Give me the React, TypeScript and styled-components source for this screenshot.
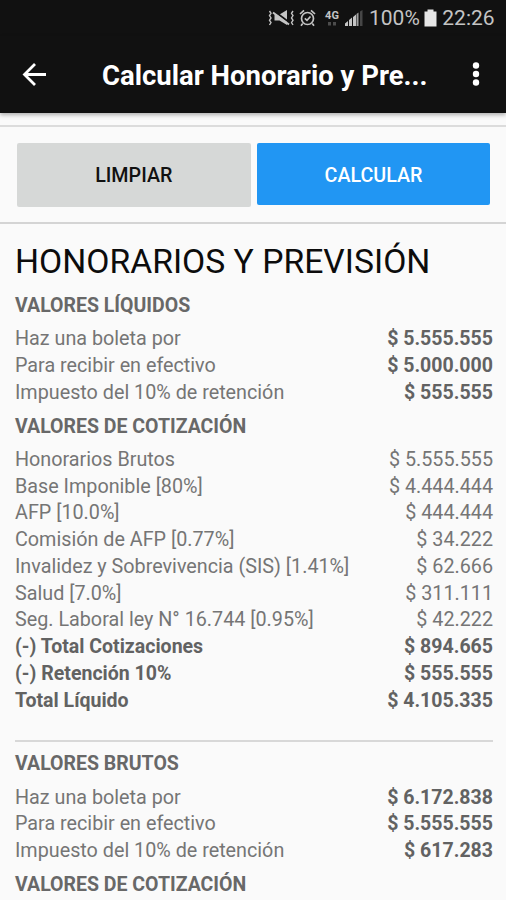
import React from 'react';
import styled, { createGlobalStyle } from 'styled-components';

const GlobalStyle = createGlobalStyle`
  * { box-sizing: border-box; }
  body { margin: 0; background: #fafafa; font-family: Roboto, sans-serif; }
`;

const Screen = styled.div`
  width: 506px;
  height: 900px;
  overflow: hidden;
  background: #fafafa;
  display: flex;
  flex-direction: column;
`;

const StatusBar = styled.div`
  flex: none;
  height: 36px;
  padding: 0 10px 0 268px;
  background: #111;
  color: #c4c4c4;
  display: flex;
  align-items: center;
  font-size: 21px;
  white-space: nowrap;
  svg { display: block; flex: none; }
`;

const StatusText = styled.span<{ $left: number }>`
  margin-left: ${(p) => p.$left}px;
  line-height: 36px;
`;

const Network = styled.span`
  width: 16px;
  margin-left: 8px;
  margin-top: -1px;
  display: flex;
  flex-direction: column;
  align-items: center;
  font-size: 11px;
  font-weight: 700;
  line-height: 11px;
`;

const AppBar = styled.header`
  flex: none;
  height: 77px;
  padding: 0 19px 0 21px;
  background: #111;
  color: #fff;
  display: flex;
  align-items: center;
  box-shadow: 0 2px 4px rgba(0, 0, 0, 0.3);
`;

const IconButton = styled.button`
  width: 28px;
  height: 28px;
  padding: 0;
  border: 0;
  background: none;
  color: inherit;
  svg { display: block; }
`;

const Title = styled.h1`
  margin: 2px auto 0 53px;
  width: 326px;
  font-size: 27.5px;
  font-weight: 700;
  line-height: 36px;
  white-space: nowrap;
`;

const Actions = styled.div`
  flex: none;
  height: 99px;
  margin-top: 12px;
  padding: 15.5px 16px 16px 16.5px;
  border-top: 2px solid #dcdcdc;
  border-bottom: 2px solid #d4d4d4;
  display: grid;
  grid-template-columns: 234.5px 233px;
  column-gap: 6px;
`;

const Button = styled.button<{ $primary?: boolean }>`
  height: ${(p) => (p.$primary ? 62 : 64)}px;
  padding: ${(p) => (p.$primary ? 4 : 2)}px 0 0;
  border: 0;
  border-radius: 2px;
  background: ${(p) => (p.$primary ? '#2196f3' : '#d6d8d7')};
  color: ${(p) => (p.$primary ? '#fff' : '#111')};
  font: 500 19.7px/24px Roboto, sans-serif;
`;

const Content = styled.main`
  padding: 18px 13px 0 15px;
  color: #6b6b6b;
`;

const Heading = styled.h2`
  margin: 0 0 3.5px;
  color: #0c0c0c;
  font-size: 33.7px;
  font-weight: 400;
  line-height: 40px;
  white-space: nowrap;
`;

const Section = styled.section<{ $divided?: boolean }>`
  border-top: ${(p) => (p.$divided ? '2px solid #d8d8d8' : '0')};
  margin-top: ${(p) => (p.$divided ? 25.5 : 0)}px;
  padding-top: ${(p) => (p.$divided ? 2.25 : 0)}px;
`;

const Subheading = styled.h3`
  margin: 0;
  padding: 8.25px 0;
  color: #686868;
  font-size: 19.5px;
  font-weight: 700;
  line-height: 24px;
`;

const Row = styled.div`
  height: 26.75px;
  display: flex;
  justify-content: space-between;
  font-size: 19.7px;
  line-height: 26.75px;
  white-space: nowrap;
`;

const Cell = styled.span<{ $bold?: boolean }>`
  font-size: ${(p) => (p.$bold ? 19.55 : 19.75)}px;
  font-weight: ${(p) => (p.$bold ? 700 : 400)};
  color: ${(p) => (p.$bold ? '#626262' : '#757575')};
`;

type Item = { label: string; value: string; bold?: 'value' | 'all' };

const liquid: Item[] = [
  { label: 'Haz una boleta por', value: '5.555.555', bold: 'value' },
  { label: 'Para recibir en efectivo', value: '5.000.000', bold: 'value' },
  { label: 'Impuesto del 10% de retención', value: '555.555', bold: 'value' },
];

const contributions: Item[] = [
  { label: 'Honorarios Brutos', value: '5.555.555' },
  { label: 'Base Imponible [80%]', value: '4.444.444' },
  { label: 'AFP [10.0%]', value: '444.444' },
  { label: 'Comisión de AFP [0.77%]', value: '34.222' },
  { label: 'Invalidez y Sobrevivencia (SIS) [1.41%]', value: '62.666' },
  { label: 'Salud [7.0%]', value: '311.111' },
  { label: 'Seg. Laboral ley N° 16.744 [0.95%]', value: '42.222' },
  { label: '(-) Total Cotizaciones', value: '894.665', bold: 'all' },
  { label: '(-) Retención 10%', value: '555.555', bold: 'all' },
  { label: 'Total Líquido', value: '4.105.335', bold: 'all' },
];

const gross: Item[] = [
  { label: 'Haz una boleta por', value: '6.172.838', bold: 'value' },
  { label: 'Para recibir en efectivo', value: '5.555.555', bold: 'value' },
  { label: 'Impuesto del 10% de retención', value: '617.283', bold: 'value' },
];

function Rows({ items }: { items: Item[] }) {
  return (
    <>
      {items.map((item) => (
        <Row key={item.label}>
          <Cell $bold={item.bold === 'all'}>{item.label}</Cell>
          <Cell $bold={!!item.bold}>$ {item.value}</Cell>
        </Row>
      ))}
    </>
  );
}

const MuteIcon = () => (
  <svg width="27" height="20" viewBox="0 0 27 20" fill="none" stroke="currentColor" strokeWidth="1.4">
    <path d="M1.500 3l1.500 2.300-1.500 2.300 1.500 2.400-1.500 2.300 1.500 2.300-1.500 2.400M25 3l-1.500 2.300 1.500 2.300-1.500 2.400 1.500 2.300-1.500 2.300 1.500 2.400" />
    <path d="M6.500 6.500h5L19 2v15l-7.500-4.500h-5z" fill="currentColor" stroke="none" />
    <path d="M6 3l16 12" stroke="#111" strokeWidth="2" />
    <path d="M5 4.500l16 12" strokeWidth="2" />
  </svg>
);

const AlarmIcon = () => (
  <svg width="17" height="18" viewBox="0 0 17 18" fill="none" stroke="currentColor" strokeWidth="1.7">
    <circle cx="8.500" cy="9.500" r="6" />
    <path d="M1 5l4-3.700M16 5l-4-3.700M3.700 14.500L2 16.700M13.300 14.500l1.700 2.200M5.800 9.300l2.200 2 3.500-3.800" />
  </svg>
);

const SignalIcon = () => (
  <svg width="20" height="18" viewBox="0 0 20 18" fill="currentColor">
    <path d="M1 17v-2.500l3-2.500v5zM5 17v-6l3-2.500V17zM9 17V8l3-2.500V17z" />
    <path d="M12.500 17V5L14.500 3.500V17z" opacity=".8" />
    <path d="M16 17V2.500L18.500 1v16z" opacity=".3" />
  </svg>
);

export default function App() {
  return (
    <>
      <GlobalStyle />
      <Screen>
        <StatusBar>
          <MuteIcon />
          <StatusText $left={4}><AlarmIcon /></StatusText>
          <Network>
            4G
            <svg width="8" height="5" viewBox="0 0 8 5" fill="#4c4c4c">
              <path d="M0 1h3v3.500H0zM5 1h3v3.500H5z" />
            </svg>
          </Network>
          <StatusText $left={4}><SignalIcon /></StatusText>
          <StatusText $left={5}>100%</StatusText>
          <StatusText $left={4}>
            <svg width="13" height="18" viewBox="0 0 13 18" fill="#e6e6e6">
              <path d="M3.500 0.500h6v2H12.500v15H0.500V2.500h3z" />
            </svg>
          </StatusText>
          <StatusText $left={5.5}>22:26</StatusText>
        </StatusBar>
        <AppBar>
          <IconButton aria-label="Volver">
            <svg width="28" height="28" viewBox="0 0 28 28" fill="none" stroke="#fff" strokeWidth="2.8">
              <path d="M25 13.500H4M14 3L3.500 13.500 14 24" />
            </svg>
          </IconButton>
          <Title>Calcular Honorario y Pre...</Title>
          <IconButton aria-label="Más opciones">
            <svg width="28" height="28" viewBox="0 0 28 28" fill="#fff">
              <circle cx="17" cy="4.500" r="3.200" />
              <circle cx="17" cy="13" r="3.200" />
              <circle cx="17" cy="21.500" r="3.200" />
            </svg>
          </IconButton>
        </AppBar>
        <Actions>
          <Button>LIMPIAR</Button>
          <Button $primary>CALCULAR</Button>
        </Actions>
        <Content>
          <Heading>HONORARIOS Y PREVISIÓN</Heading>
          <Section>
            <Subheading>VALORES LÍQUIDOS</Subheading>
            <Rows items={liquid} />
            <Subheading>VALORES DE COTIZACIÓN</Subheading>
            <Rows items={contributions} />
          </Section>
          <Section $divided>
            <Subheading>VALORES BRUTOS</Subheading>
            <Rows items={gross} />
            <Subheading>VALORES DE COTIZACIÓN</Subheading>
          </Section>
        </Content>
      </Screen>
    </>
  );
}
